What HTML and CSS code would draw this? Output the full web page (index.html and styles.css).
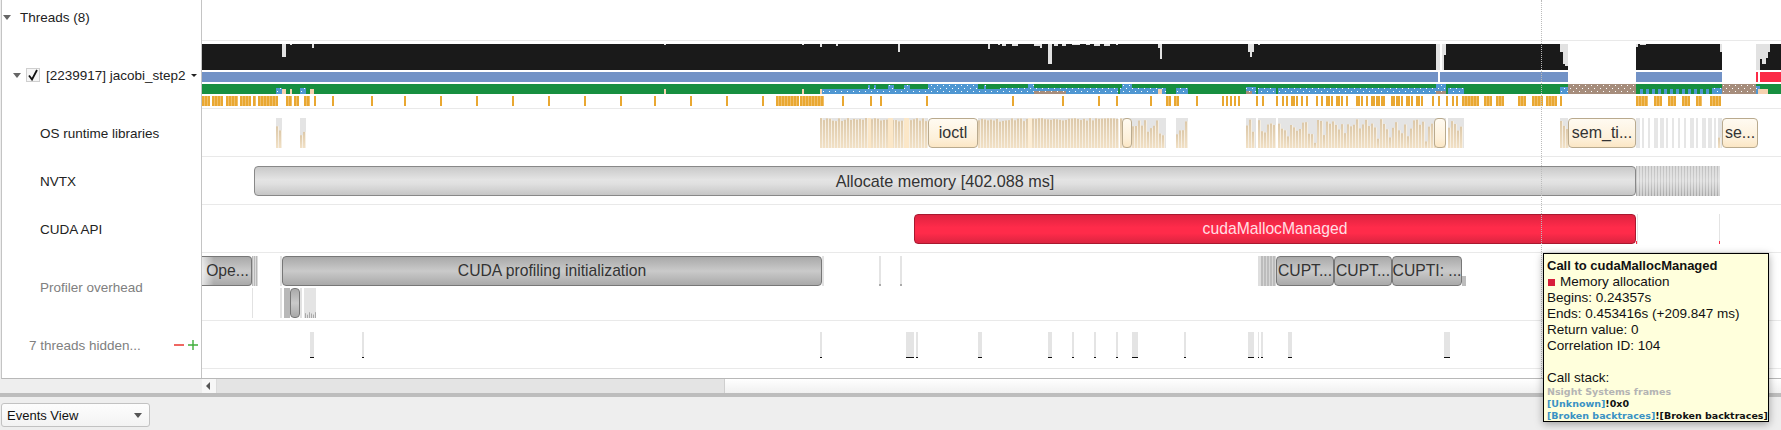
FILE: index.html
```html
<!DOCTYPE html>
<html>
<head>
    <title>Timeline View</title>
    <meta charset="UTF-8">
    <meta name="viewport" content="width=device-width, initial-scale=1.0">
    <link rel="stylesheet" href="styles.css">
</head>
<body>
    <div class="panel">
        <div class="tree">
            <div class="row row-threads">
                <span class="caret caret-threads"></span>
                <span class="threads-label">Threads (8)</span>
            </div>
            <div class="row row-thread">
                <span class="caret caret-thread"></span>
                <span class="checkbox">
                    <svg width="12" height="12" viewBox="0 0 12 12"><path d="M2 6.5 L5 10.5 L10 1" fill="none" stroke="#111" stroke-width="1.8"/></svg>
                </span>
                <span class="thread-label">[2239917] jacobi_step2</span>
                <span class="caret caret-small"></span>
            </div>
            <div class="row row-lane"><span class="lane-label">OS runtime libraries</span></div>
            <div class="row row-lane"><span class="lane-label">NVTX</span></div>
            <div class="row row-lane"><span class="lane-label">CUDA API</span></div>
            <div class="row row-tall"><span class="lane-label muted">Profiler overhead</span></div>
            <div class="row row-lane row-hidden">
                <span class="hidden-label muted">7 threads hidden...</span>
                <svg class="hidden-btns" width="26" height="12" viewBox="0 0 26 12">
                    <path d="M0 6 H10" stroke="#e8261f" stroke-width="1.4"/>
                    <path d="M14 6 H24 M19 1 V11" stroke="#3fae3a" stroke-width="1.4"/>
                </svg>
            </div>
        </div>

        <div class="timeline">
            <div class="row row-threads"></div>
            <div class="row row-thread">
                <svg id="thread-chart" class="chart" viewBox="202 41 1579 67">
                    <defs>
                        <pattern id="dots-blue" width="6" height="6" patternUnits="userSpaceOnUse">
                            <rect width="6" height="6" fill="#4f97d2"/>
                            <rect x="1" y="1" width="1" height="1" fill="#fff"/>
                            <rect x="4" y="4" width="1" height="1" fill="#fff"/>
                        </pattern>
                        <pattern id="dots-brown" width="6" height="6" patternUnits="userSpaceOnUse">
                            <rect width="6" height="6" fill="#a68d7c"/>
                            <rect x="1" y="1" width="1" height="1" fill="#fff"/>
                            <rect x="4" y="4" width="1" height="1" fill="#fff"/>
                        </pattern>
                    </defs>
                </svg>
            </div>
            <div class="row row-lane">
                <svg id="os-chart" class="chart" viewBox="202 109 1579 47">
                    <defs>
                        <linearGradient id="tan" x1="0" y1="0" x2="0" y2="1">
                            <stop offset="0" stop-color="#dcc8a9"/>
                            <stop offset="1" stop-color="#f2e1c6"/>
                        </linearGradient>
                    </defs>
                </svg>
                <div class="bar bar-os" style="left: 726px; width: 50px">ioctl</div>
                <div class="bar bar-os" style="left: 920px; width: 10px"></div>
                <div class="bar bar-os" style="left: 1232px; width: 12px"></div>
                <div class="bar bar-os" style="left: 1366px; width: 68px">sem_ti...</div>
                <div class="bar bar-os" style="left: 1520px; width: 36px">se...</div>
            </div>
            <div class="row row-lane">
                <div class="bar bar-grey" style="left: 52px; width: 1382px">Allocate memory [402.088 ms]</div>
                <div class="bar-dense" style="left: 1434px; width: 84px"></div>
            </div>
            <div class="row row-lane">
                <svg id="api-chart" class="chart" viewBox="202 205 1579 47"></svg>
                <div class="bar bar-red" style="left: 712px; width: 722px">cudaMallocManaged</div>
            </div>
            <div class="row row-tall">
                <svg id="overhead-chart" class="chart" viewBox="202 253 1579 67"></svg>
                <div class="bar bar-dark bar-cut" style="left: 0; width: 50px">Ope...</div>
                <div class="bar bar-dark" style="left: 80px; width: 540px">CUDA profiling initialization</div>
                <div class="bar bar-dark" style="left: 1074px; width: 58px">CUPT...</div>
                <div class="bar bar-dark" style="left: 1132px; width: 58px">CUPT...</div>
                <div class="bar bar-dark" style="left: 1190px; width: 70px">CUPTI: ...</div>
                <div class="bar bar-dark bar-low" style="left: 88px; width: 10px"></div>
            </div>
            <div class="row row-lane">
                <svg id="hidden-chart" class="chart" viewBox="202 321 1579 47"></svg>
            </div>
        </div>
    </div>

    <div class="scrollbar">
        <div class="scroll-left"></div>
        <div class="scroll-arrow"></div>
        <div class="scroll-handle"></div>
        <div class="scroll-rest"></div>
    </div>
    <div class="splitter"></div>

    <div class="footer">
        <div class="combo">
            <span>Events View</span>
            <span class="caret caret-combo"></span>
        </div>
    </div>

    <div class="cursor-line"></div>

    <div class="tooltip">
        <div class="tip-title">Call to cudaMallocManaged</div>
        <div><span class="tip-swatch"></span>Memory allocation</div>
        <div>Begins: 0.24357s</div>
        <div>Ends: 0.453416s (+209.847 ms)</div>
        <div>Return value: 0</div>
        <div>Correlation ID: 104</div>
        <div class="tip-blank"></div>
        <div>Call stack:</div>
        <div class="tip-small tip-grey">Nsight Systems frames</div>
        <div class="tip-small"><span class="tip-link">[Unknown]</span>!0x0</div>
        <div class="tip-small"><span class="tip-link">[Broken backtraces]</span>![Broken backtraces]</div>
    </div>

    <script src="app.js"></script>
</body>
</html>
```

FILE: styles.css
```css
* {
    box-sizing: border-box;
}
body {
    margin: 0;
    height: 430px;
    overflow: hidden;
    background-color: #eeeeee;
    color: #222;
    font-family: "Liberation Sans", Arial, sans-serif;
    font-size: 13.5px;
}

.panel {
    display: flex;
    height: 379px;
    margin-left: 1px;
    background-color: #fff;
    border-left: 1px solid #c4c4c4;
    border-bottom: 1px solid #b8b8b8;
}
.tree {
    width: 200px;
    flex-shrink: 0;
    border-right: 1px solid #c4c4c4;
}
.timeline {
    flex: 1;
    min-width: 0;
}

.row {
    position: relative;
    display: flex;
    align-items: center;
}
.row-threads {
    height: 41px;
    padding-bottom: 6px;
}
.row-thread {
    height: 68px;
}
.row-lane {
    height: 48px;
}
.row-tall {
    height: 68px;
}
.timeline .row {
    border-bottom: 1px solid #e9e9e9;
}

.caret {
    width: 0;
    height: 0;
    border-left: 4px solid transparent;
    border-right: 4px solid transparent;
    border-top: 5px solid #666;
}
.caret-threads {
    margin-left: 1px;
}
.threads-label {
    margin-left: 9px;
}
.caret-thread {
    margin-left: 11px;
}
.checkbox {
    display: flex;
    align-items: center;
    justify-content: center;
    width: 14px;
    height: 14px;
    margin-left: 5px;
    background-color: #f6f6f6;
    border: 1px solid #cfcfcf;
}
.thread-label {
    margin-left: 6px;
    white-space: nowrap;
}
.caret-small {
    margin-left: 5px;
    border-left-width: 3px;
    border-right-width: 3px;
    border-top: 3px solid #222;
}
.lane-label {
    margin-left: 38px;
}
.row-tall .lane-label {
    padding-top: 1px;
}
.muted {
    color: #808080;
}
.hidden-label {
    margin-left: 27px;
    white-space: nowrap;
}
.hidden-btns {
    position: absolute;
    left: 172px;
    top: 18px;
}

.chart {
    position: absolute;
    left: 0;
    top: 0;
    width: 1579px;
    height: 100%;
}

.bar {
    position: absolute;
    top: 9px;
    height: 30px;
    display: flex;
    align-items: center;
    justify-content: center;
    overflow: hidden;
    border-radius: 4px;
    border: 1px solid #888;
    color: #333;
    font-size: 16px;
    white-space: nowrap;
}
.bar-os {
    background: linear-gradient(#fffaf1, #fdf0da 70%, #fbe6c4);
    border-color: #b9aa8e;
}
.bar-grey {
    background: linear-gradient(#c9c9c9, #e4e4e4 45%, #e0e0e0 60%, #c6c6c6);
    font-size: 16.2px;
}
.bar-red {
    background: linear-gradient(#df2340, #ff2b4a 45%, #ff2b4a 65%, #dc2440);
    border-color: #a8182f;
    color: #ffdfe3;
    font-size: 15.7px;
}
.bar-dark {
    top: 3px;
    background: linear-gradient(#a9a9a9, #cacaca 50%, #a9a9a9);
    border-color: #777;
    font-size: 15.7px;
}
.bar-cut {
    background:
        linear-gradient(90deg, rgba(255, 255, 255, 0.7), rgba(255, 255, 255, 0) 12px),
        linear-gradient(#a9a9a9, #cacaca 50%, #a9a9a9);
    border-left: none;
    border-radius: 0 4px 4px 0;
    padding-left: 2px;
}
.bar-low {
    top: 35px;
}
.bar-dense {
    position: absolute;
    top: 9px;
    height: 30px;
    background:
        linear-gradient(rgba(255, 255, 255, 0.25), rgba(255, 255, 255, 0.45) 50%, rgba(255, 255, 255, 0)),
        repeating-linear-gradient(90deg, #a9a9a9 0 1px, #cfcfcf 1px 3px);
}

.scrollbar {
    display: flex;
    height: 14px;
}
.scroll-left {
    width: 202px;
    flex-shrink: 0;
}
.scroll-arrow {
    width: 14px;
    flex-shrink: 0;
    background-color: #f7f7f7;
    position: relative;
}
.scroll-arrow::after {
    content: "";
    position: absolute;
    left: 4px;
    top: 3px;
    border-top: 4px solid transparent;
    border-bottom: 4px solid transparent;
    border-right: 4px solid #555;
}
.scroll-handle {
    width: 509px;
    flex-shrink: 0;
    background-color: #e4e4e4;
    border-left: 1px solid #dcdcdc;
    border-right: 1px solid #cfcfcf;
}
.scroll-rest {
    flex: 1;
    background: linear-gradient(#fff, #f0f0f0);
}
.splitter {
    height: 4px;
    background-color: #bdbdbd;
}
.footer {
    padding: 6px 0 0 1px;
}
.combo {
    display: flex;
    align-items: center;
    justify-content: space-between;
    width: 149px;
    height: 24px;
    padding: 0 7px 0 5px;
    background: linear-gradient(#fdfdfd, #f3f3f3);
    border: 1px solid #c2c2c2;
    border-radius: 3px;
    color: #111;
    font-size: 13px;
}
.caret-combo {
    border-top-color: #555;
}

.cursor-line {
    position: absolute;
    left: 1541px;
    top: 0;
    height: 378px;
    border-left: 1px dotted #bbb;
}

.tooltip {
    position: absolute;
    left: 1543px;
    top: 253px;
    width: 226px;
    height: 169px;
    padding: 4px 3px 0 3px;
    background-color: #ffffdc;
    border: 1px solid #000;
    box-shadow: 0 2px 8px rgba(0, 0, 0, 0.35);
    color: #111;
    font-size: 13.5px;
    line-height: 16px;
    white-space: nowrap;
}
.tip-title {
    font-size: 13px;
    font-weight: bold;
}
.tip-swatch {
    display: inline-block;
    width: 7px;
    height: 7px;
    margin: 0 5px 0 1px;
    background-color: #d81e3a;
}
.tip-blank {
    height: 16px;
}
.tip-small {
    font-family: "DejaVu Sans", sans-serif;
    font-size: 9.5px;
    font-weight: bold;
    line-height: 12px;
}
.tip-grey {
    color: #b4b4b4;
}
.tip-link {
    color: #3a92c4;
}
```

FILE: app.js
```js
// draws the timeline charts, all x/y values below are page coordinates
const NS = 'http://www.w3.org/2000/svg';

const GAP_GREY = '#e2e2e2';
const BLACK = '#1a1a1a';
const BLUE = '#7292c6';
const RED = '#fb2b47';
const GREEN = '#178f40';
const PEACH = '#f6d2b0';
const ORANGE = '#e9a832';
const ORANGE_LIGHT = '#f0bf6a';

function rect(svg, x, y, w, h, fill) {
    const r = document.createElementNS(NS, 'rect');
    r.setAttribute('x', x);
    r.setAttribute('y', y);
    r.setAttribute('width', w);
    r.setAttribute('height', h);
    r.setAttribute('fill', fill);
    svg.appendChild(r);
}

// same numbers on every load
function noise(i) {
    const v = Math.sin(i * 12.9898) * 43758.5453;
    return v - Math.floor(v);
}

function drawCpu(svg) {
    const spans = [[202, 1568], [1636, 1722], [1770, 1781]];
    spans.forEach(s => rect(svg, s[0], 44, s[1] - s[0], 26, BLACK));

    // x, width, depth from the top
    const gaps = [
        [282, 4, 13], [290, 2, 1], [312, 2, 4], [664, 2, 1], [802, 2, 1], [820, 2, 3],
        [836, 2, 2], [898, 2, 8], [988, 2, 5], [998, 2, 1], [1002, 4, 2], [1012, 6, 2],
        [1034, 6, 2], [1040, 2, 4], [1048, 4, 20], [1054, 4, 2], [1062, 4, 2], [1072, 8, 1],
        [1086, 4, 1], [1094, 6, 2], [1104, 6, 2], [1116, 2, 1], [1158, 2, 4], [1160, 2, 15],
        [1248, 6, 8], [1250, 2, 13], [1258, 2, 1], [1436, 4, 26], [1442, 2, 26], [1444, 2, 11],
        [1560, 3, 8], [1563, 2, 20], [1565, 3, 22], [1636, 2, 3], [1640, 6, 1], [1720, 2, 8]
    ];
    gaps.forEach(g => rect(svg, g[0], 44, g[1], g[2], GAP_GREY));
    rect(svg, 1440, 44, 2, 26, '#fff');

    rect(svg, 1756, 44, 2, 26, GAP_GREY);
    rect(svg, 1758, 44, 12, 26, GAP_GREY);
    rect(svg, 1760, 59, 2, 11, BLACK);
    rect(svg, 1762, 64, 4, 6, BLACK);
    rect(svg, 1766, 58, 2, 12, BLACK);
    rect(svg, 1768, 52, 2, 18, BLACK);
}

function drawThreadRows(svg) {
    rect(svg, 202, 72, 1236, 10, BLUE);
    rect(svg, 1440, 72, 128, 10, BLUE);
    rect(svg, 1636, 72, 86, 10, BLUE);
    rect(svg, 1756, 72, 2, 10, RED);
    rect(svg, 1760, 72, 21, 10, RED);

    rect(svg, 202, 84, 1579, 10, GREEN);

    const dots = 'url(#dots-blue)';
    const brown = 'url(#dots-brown)';

    // x, width, top of the blue run
    const patches = [
        [276, 6, 88], [300, 6, 88], [820, 180, 89], [868, 2, 85], [874, 2, 85], [888, 6, 85],
        [904, 6, 85], [928, 50, 84], [984, 2, 85], [1000, 118, 88], [1028, 6, 84],
        [1120, 46, 88], [1122, 10, 84], [1176, 12, 88], [1246, 10, 87], [1258, 18, 88],
        [1278, 158, 88], [1436, 10, 84], [1448, 16, 88], [1560, 8, 87], [1712, 10, 88],
        [1756, 4, 86]
    ];
    patches.forEach(p => rect(svg, p[0], p[2], p[1], 94 - p[2], dots));

    [[1034, 32], [1056, 10], [1246, 6], [1436, 10]].forEach(p => rect(svg, p[0], 91, p[1], 3, brown));
    rect(svg, 1568, 84, 68, 10, brown);
    rect(svg, 1722, 84, 34, 10, brown);

    for (let x = 1640; x < 1712; x += 6) {
        rect(svg, x, 89, 3, 5, dots);
    }

    [[282, 4], [290, 2], [310, 4], [664, 2], [802, 2], [820, 2], [1158, 4]].forEach(p => rect(svg, p[0], 89, p[1], 5, PEACH));
    rect(svg, 1758, 89, 10, 5, PEACH);
}

function drawTicks(svg) {
    const single = [
        314, 332, 371, 404, 440, 476, 512, 548, 584, 620, 654, 690, 726, 762, 842, 870, 880, 926,
        1012, 1062, 1098, 1116, 1150, 1196, 1222, 1226, 1230, 1234, 1238, 1256, 1262,
        1276, 1282
    ];
    single.forEach(x => rect(svg, x, 96, 2, 10, ORANGE));

    // busy stretches, x from and x to
    const dense = [
        [202, 210], [212, 223], [226, 238], [240, 250], [253, 256], [258, 278], [286, 292],
        [294, 299], [304, 310], [776, 798], [800, 824], [1166, 1170], [1174, 1178],
        [1462, 1478], [1484, 1492], [1496, 1504], [1518, 1526], [1532, 1542],
        [1546, 1556], [1636, 1648], [1654, 1661], [1668, 1675], [1682, 1690], [1696, 1702],
        [1710, 1720]
    ];
    dense.forEach(d => {
        rect(svg, d[0], 96, d[1] - d[0], 10, ORANGE_LIGHT);
        for (let x = d[0]; x < d[1]; x += 3) {
            rect(svg, x, 96, 2, 10, ORANGE);
        }
    });

    // regular calls between the two busy parts
    for (let x = 1286; x < 1424; x += 5) {
        const w = noise(x) > 0.6 ? 4 : 2;
        if (noise(x + 3) > 0.1) rect(svg, x, 96, w, 10, ORANGE);
    }
    [1432, 1438, 1446, 1452, 1456].forEach(x => rect(svg, x, 96, 2, 10, ORANGE));
    rect(svg, 1560, 96, 2, 10, ORANGE);
}

// grey backdrop with tan bars of uneven height, low and high are bar heights
function stripes(svg, from, to, low, high) {
    rect(svg, from, 118, to - from, 30, '#e4e4e4');
    for (let x = from; x < to - 1; x += 3) {
        const h = low + (high - low) * Math.sqrt(noise(x));
        rect(svg, x, 148 - h, 3, h, '#f6efe3');
        rect(svg, x, 148 - h, 2, h, 'url(#tan)');
    }
}

function drawOs(svg) {
    [[276, 282, 5, 30], [300, 306, 8, 20]].forEach(s => stripes(svg, s[0], s[1], s[2], s[3]));
    stripes(svg, 820, 928, 25, 30);
    stripes(svg, 978, 1118, 26, 30);
    stripes(svg, 1120, 1166, 10, 30);
    stripes(svg, 1176, 1188, 6, 28);
    stripes(svg, 1246, 1256, 14, 29);
    stripes(svg, 1258, 1276, 8, 30);
    stripes(svg, 1278, 1446, 4, 30);
    stripes(svg, 1448, 1464, 6, 28);
    stripes(svg, 1560, 1568, 8, 30);

    for (let x = 1636; x < 1716; x += 6) {
        const w = noise(x) > 0.5 ? 4 : 2;
        rect(svg, x, 118, w, 30, '#e6e6e6');
    }
    stripes(svg, 1718, 1722, 6, 12);

    // bright spots where several calls stack up
    rect(svg, 1028, 118, 4, 30, '#fdeed6');
    rect(svg, 868, 118, 3, 30, '#fbe7c8');
    rect(svg, 888, 118, 5, 30, '#fbe7c8');
    rect(svg, 904, 118, 5, 30, '#fbe7c8');
}

function drawApi(svg) {
    rect(svg, 1637, 214, 1, 30, '#e4e4e4');
    rect(svg, 1719, 214, 1, 30, '#e4e4e4');
    rect(svg, 1719, 241, 1, 3, RED);
    rect(svg, 1636, 241, 1, 3, RED);
}

function drawOverhead(svg) {
    for (let x = 252; x < 258; x += 2) {
        rect(svg, x, 256, 1, 30, '#b9b9b9');
        rect(svg, x + 1, 256, 1, 30, '#dcdcdc');
    }
    rect(svg, 252, 288, 1, 30, '#e2e2e2');
    rect(svg, 280, 256, 2, 30, '#e2e2e2');
    rect(svg, 280, 288, 2, 30, '#e2e2e2');
    rect(svg, 284, 288, 6, 30, '#b8b8b8');
    rect(svg, 300, 288, 2, 30, '#e2e2e2');
    rect(svg, 304, 288, 12, 30, '#e4e4e4');
    for (let x = 305; x < 316; x += 2) {
        const h = 2 + 4 * noise(x);
        rect(svg, x, 318 - h, 1, h, '#aaa');
    }
    rect(svg, 822, 256, 2, 30, '#e2e2e2');
    rect(svg, 879, 256, 2, 30, '#e4e4e4');
    rect(svg, 900, 256, 2, 30, '#e4e4e4');
    rect(svg, 879, 284, 2, 2, '#aaa');
    rect(svg, 900, 284, 2, 2, '#aaa');

    for (let x = 1258; x < 1276; x += 3) {
        rect(svg, x, 256, 2, 30, '#bcbcbc');
        rect(svg, x + 2, 256, 1, 30, '#d6d6d6');
    }
    rect(svg, 1258, 256, 3, 30, '#dedede');
    rect(svg, 1462, 276, 4, 10, '#bdbdbd');
}

function drawHidden(svg) {
    const ticks = [
        [310, 4], [362, 2], [820, 2], [906, 8], [916, 2], [978, 4], [1048, 4], [1072, 2],
        [1094, 2], [1116, 2], [1132, 6], [1184, 2], [1248, 6], [1258, 1], [1261, 2],
        [1288, 4], [1444, 6]
    ];
    ticks.forEach(t => {
        rect(svg, t[0], 332, t[1], 26, '#e4e4e4');
        rect(svg, t[0], 357, t[1], 1, '#111');
    });
}

const threadChart = document.getElementById('thread-chart');
drawCpu(threadChart);
drawThreadRows(threadChart);
drawTicks(threadChart);
drawOs(document.getElementById('os-chart'));
drawApi(document.getElementById('api-chart'));
drawOverhead(document.getElementById('overhead-chart'));
drawHidden(document.getElementById('hidden-chart'));
```
